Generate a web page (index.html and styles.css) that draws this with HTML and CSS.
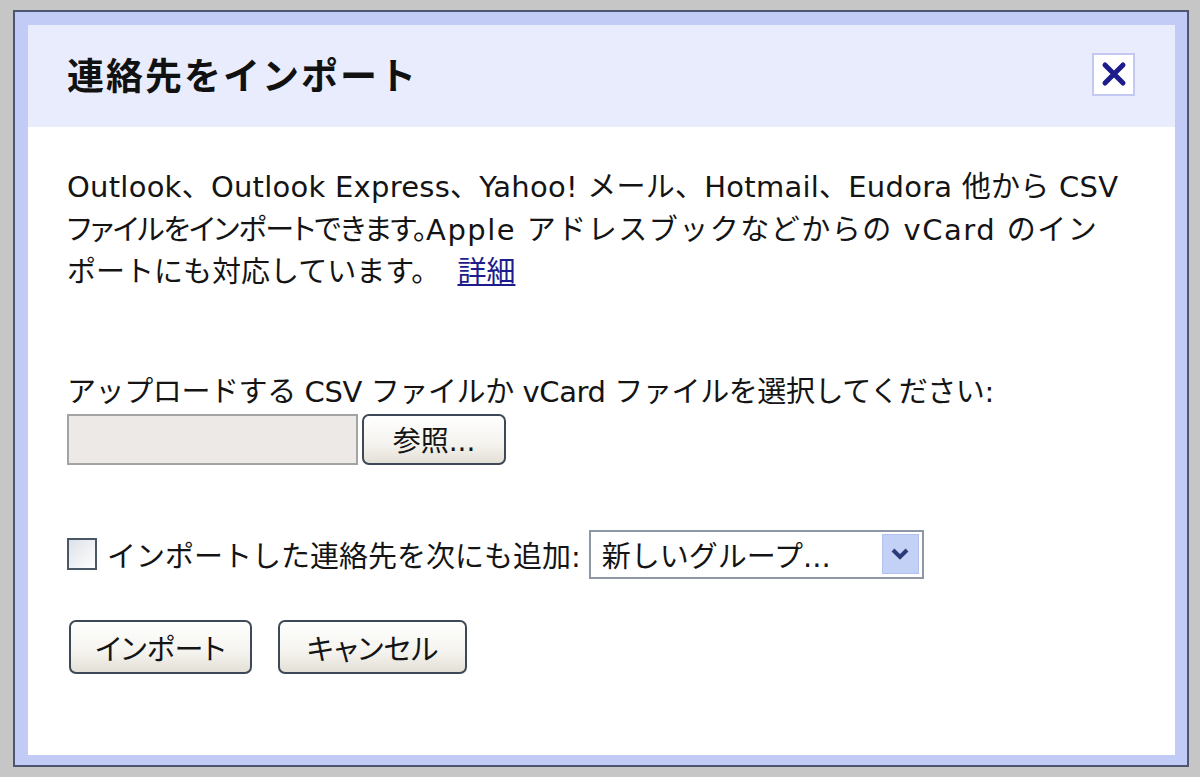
FILE: index.html
```html
<!DOCTYPE html>
<html lang="ja">
<head>
<meta charset="utf-8">
<title>連絡先をインポート</title>
<link rel="stylesheet" href="styles.css">
</head>
<body>
<div class="dialog">
  <div class="panel">
    <div class="header">
      <h1 class="title">連絡先をインポート</h1>
      <button class="close" aria-label="閉じる">
        <svg width="26" height="26" viewBox="0 0 26 26"><path d="M4 4 L22 22 M22 4 L4 22" stroke="#1c1c8a" stroke-width="5" stroke-linecap="round"/></svg>
      </button>
    </div>
    <div class="body">
      <p class="intro">
        <span class="line first">Outlook、Outlook Express、Yahoo! メール、Hotmail、Eudora 他から CSV</span>
        <span class="line"><span class="tight">ファイルをインポートできます。</span><span class="wide">Apple アドレスブックなどからの vCard のイン</span></span>
        <span class="line">ポートにも対応しています。 <a href="#" class="link">詳細</a></span>
      </p>
      <div class="label">アップロードする CSV ファイルか vCard ファイルを選択してください:</div>
      <div class="filerow">
        <span class="textbox"></span>
        <button class="btn browse">参照...</button>
      </div>
      <div class="grouprow">
        <span class="checkbox"></span>
        <span class="checklabel">インポートした連絡先を次にも追加:</span>
        <span class="select">
          <span class="selecttext">新しいグループ...</span>
          <span class="arrow">
            <svg width="20" height="14" viewBox="0 0 20 14"><path d="M3 3 L10 10 L17 3" fill="none" stroke="#2b3a78" stroke-width="4"/></svg>
          </span>
        </span>
      </div>
      <div class="actions">
        <button class="btn action import">インポート</button>
        <button class="btn action cancel">キャンセル</button>
      </div>
    </div>
  </div>
</div>
</body>
</html>
```
FILE: styles.css
```css
html, body {
  margin: 0;
  padding: 0;
}
body {
  background: #c6c6c6;
  width: 1200px;
  height: 777px;
  overflow: hidden;
  padding-top: 10px;
  padding-left: 13px;
  box-sizing: border-box;
  font-family: "DejaVu Sans", "Noto Sans CJK JP", sans-serif;
  color: #141414;
}
.dialog {
  width: 1176px;
  box-sizing: border-box;
  border: 2px solid #4d5570;
  background: #c2cbf6;
  padding: 13px 12px 10px 13px;
}
.panel {
  background: #ffffff;
  height: 730px;
  display: flex;
  flex-direction: column;
}
.header {
  height: 102px;
  box-sizing: border-box;
  background: #e8ecfc;
  display: flex;
  align-items: center;
  justify-content: space-between;
  padding: 0 40px 4px 39px;
}
.title {
  margin: 0;
  font-family: "Noto Sans CJK JP", sans-serif;
  font-size: 37px;
  font-weight: bold;
  color: #111;
  letter-spacing: 2px;
}
.close {
  width: 43px;
  height: 43px;
  border: 2px solid #c3c9f2;
  background: #fff;
  padding: 0;
  display: flex;
  align-items: center;
  justify-content: center;
}
.body {
  padding: 39px 39px 0 39px;
  font-size: 29px;
}
.intro {
  margin: 0;
  line-height: 42.5px;
}
.line {
  display: block;
  white-space: nowrap;
}
.first {
  letter-spacing: 0.25px;
}
.tight {
  font-feature-settings: "palt";
  letter-spacing: -1px;
}
.wide {
  letter-spacing: 1.5px;
}
.link {
  color: #1c1c8c;
  text-decoration: underline;
  margin-left: 8px;
}
.label {
  margin-top: 76px;
  line-height: 44px;
  white-space: nowrap;
  letter-spacing: -0.4px;
}
.filerow {
  display: flex;
  gap: 4px;
  height: 51px;
}
.textbox {
  width: 291px;
  box-sizing: border-box;
  border: 2px solid #a2a4a4;
  background: #ece9e6;
}
.btn {
  font-family: "DejaVu Sans", "Noto Sans CJK JP", sans-serif;
  font-size: 28px;
  color: #141414;
  border: 2px solid #3d4858;
  border-radius: 7px;
  background: linear-gradient(#ffffff, #f4f3ee 60%, #e3e0d6);
  padding: 0;
  box-sizing: border-box;
}
.browse {
  width: 144px;
  height: 51px;
}
.grouprow {
  display: flex;
  align-items: center;
  margin-top: 65px;
  height: 49px;
}
.checkbox {
  width: 30px;
  height: 32px;
  box-sizing: border-box;
  border: 2px solid #4a5866;
  background: linear-gradient(135deg, #dde1e8, #ffffff);
}
.checklabel {
  margin-left: 10px;
  white-space: nowrap;
}
.select {
  margin-left: 8px;
  width: 335px;
  height: 49px;
  box-sizing: border-box;
  border: 2px solid #8e97a6;
  background: #fff;
  display: flex;
  align-items: center;
  justify-content: space-between;
  padding: 0 3px 0 11px;
}
.selecttext {
  white-space: nowrap;
}
.arrow {
  width: 37px;
  height: 40px;
  background: #c4d1f6;
  border: 1px solid #b3c1ef;
  box-sizing: border-box;
  display: flex;
  align-items: center;
  justify-content: center;
}
.actions {
  display: flex;
  margin-top: 41px;
  gap: 26px;
  padding-left: 2px;
}
.action {
  height: 54px;
  font-feature-settings: "palt";
  font-size: 29px;
}
.import {
  width: 183px;
}
.cancel {
  width: 189px;
}
```
